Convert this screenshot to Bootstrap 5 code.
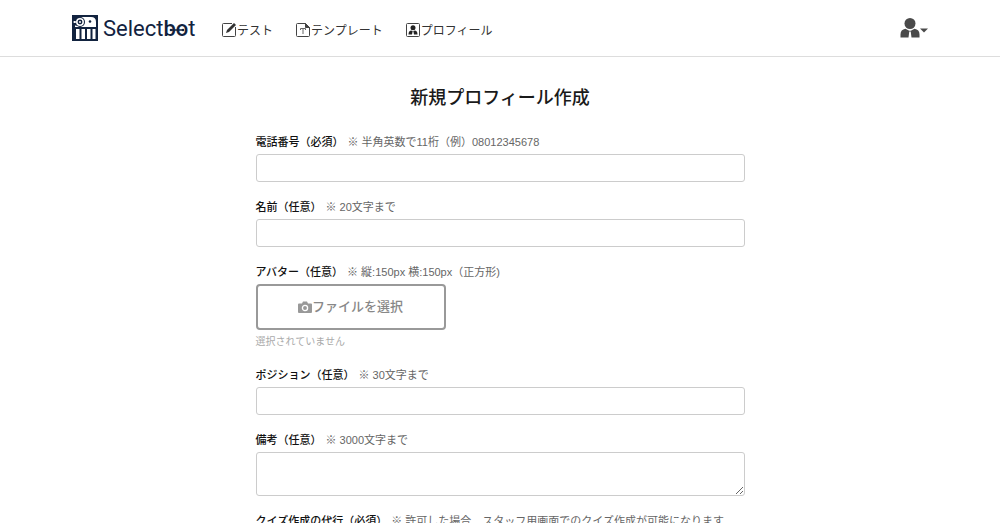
<!DOCTYPE html>
<html lang="ja">
<head>
<meta charset="utf-8">
<meta name="viewport" content="width=device-width, initial-scale=1">
<title>新規プロフィール作成 | Selectbot</title>
<link href="https://cdn.jsdelivr.net/npm/bootstrap@5.3.0/dist/css/bootstrap.min.css" rel="stylesheet">
<style>
  body { font-family: "Liberation Sans", "Noto Sans CJK JP", sans-serif; font-size: 11px; line-height: 16px; color: #222; background: #fff; }
  .site-header { border-bottom: 1px solid #ddd; min-height: 57px; padding: 0 72px; }
  .brand-mark { width: 26px; height: 26px; }
  .brand-name { width: 95px; height: 28px; }
  .main-menu { gap: 22px; font-size: 12px; padding-top: 4px; }
  .main-menu a { color: #333; }
  .main-menu svg { width: 16px; height: 16px; }
  .main-menu span { padding-top: 1px; }
  .user-toggle { color: #4a4a4a; }
  .page-title { font-size: 18px; line-height: 24px; font-weight: 500; margin: 29px 0 24px; color: #1a1a1a; }
  .profile-form { max-width: 489px; }
  .field { margin-bottom: 17px; }
  .field-label { margin-bottom: 4px; gap: 4px; }
  .field-label label { font-weight: 500; color: #111; }
  .note { color: #666; }
  .profile-form .form-control { border-color: #ccc; border-radius: 3px; min-height: 28px; padding: 4px 8px; font-size: 12px; line-height: 18px; }
  .profile-form textarea.form-control { height: 44px; }
  .file-button { width: 190px; height: 46px; border: 2px solid #999; border-radius: 4px; color: #888; font-size: 13px; font-weight: 500; background: #fff; }
  .file-state { color: #aaa; font-size: 10px; line-height: 16px; margin-top: 4px; }
</style>
</head>
<body>
<header class="site-header d-flex align-items-center">
  <a href="#" class="d-flex align-items-center text-decoration-none" aria-label="Selectbot">
    <svg class="brand-mark" viewBox="0 0 26 26">
      <rect width="26" height="26" fill="#12233f"/>
      <path d="M2 6h4v2H2zM7 2h12q5 0 5 5v5H3v-1.500h4z" fill="#fff"/>
      <circle cx="8" cy="7" r="5" fill="#12233f"/>
      <circle cx="8" cy="7" r="3.200" fill="none" stroke="#fff" stroke-width="1.500"/>
      <circle cx="8" cy="7" r="1" fill="#fff"/><circle cx="18" cy="6.500" r="1.300" fill="#12233f"/>
      <path d="M1.500 6.200h3v1.600h-3zM4 14h3.500v10H4zM9.500 14H13v10H9.500zM15 14h3.500v10H15zM20.500 14h3v10h-3z" fill="#fff"/>
    </svg>
    <svg class="brand-name ms-1" viewBox="0 0 95 28" fill="#12233f">
      <text x="1" y="22" font-family="Roboto, sans-serif" font-size="22">Selec<tspan>t</tspan><tspan font-weight="500">bo</tspan>t</text>
      <path d="M69 16h11" stroke="#12233f" stroke-width="1.500"/>
      <circle cx="69" cy="16" r="1.300"/><circle cx="81" cy="16" r="1.300"/>
    </svg>
  </a>
  <nav class="main-menu d-flex ms-4 me-auto">
    <a href="#" class="d-flex align-items-center text-decoration-none">
      <svg viewBox="0 0 16 16" fill="none" stroke="#444"><path d="M11 1.500H2.500a1 1 0 0 0-1 1v11a1 1 0 0 0 1 1h11a1 1 0 0 0 1-1V5"/><path d="M5 11l1-3 7-7 2 2-7 7z" fill="#333" stroke="none"/></svg><span>テスト</span></a>
    <a href="#" class="d-flex align-items-center text-decoration-none">
      <svg viewBox="0 0 16 16" fill="none" stroke="#444"><path d="M10.500 1.500h-8a1 1 0 0 0-1 1v11a1 1 0 0 0 1 1h11a1 1 0 0 0 1-1v-8z"/><path d="M10.500 1.500v4h4z" fill="#444"/><path d="M5.500 8V6.500h5V8M8 6.500V12" stroke="#666"/></svg><span>テンプレート</span></a>
    <a href="#" class="d-flex align-items-center text-decoration-none">
      <svg viewBox="0 0 16 16"><rect x="1.500" y="1.500" width="13" height="13" rx="1" fill="none" stroke="#444"/><circle cx="8" cy="5.700" r="2.500" fill="#222"/><path d="M3.500 12.500q0-4 3-4l1 1h1l1-1q3 0 3 4H9l-.5-2.500h-1L7 12.500z" fill="#222"/></svg><span>プロフィール</span></a>
  </nav>
  <button type="button" class="user-toggle btn p-0 border-0 d-flex align-items-center" aria-label="アカウント">
    <svg width="28" height="20" viewBox="0 0 28 20" fill="currentColor"><circle cx="10" cy="5.500" r="5.500"/><path d="M.5 19.500v-3q0-5 5-5.800l3.700 2h1.600l3.700-2q5 .8 5 5.800v3h-8l-.8-6h-1.400l-.8 6zM20 10.500h8l-4 4z"/></svg>
  </button>
</header>

<main class="px-3">
  <h1 class="page-title text-center">新規プロフィール作成</h1>
  <form class="profile-form mx-auto">
    <div class="field">
      <div class="field-label d-flex"><label for="tel">電話番号（必須）</label><span class="note">※ 半角英数で11桁（例）08012345678</span></div>
      <input type="tel" id="tel" class="form-control">
    </div>
    <div class="field">
      <div class="field-label d-flex"><label for="name">名前（任意）</label><span class="note">※ 20文字まで</span></div>
      <input type="text" id="name" class="form-control">
    </div>
    <div class="field">
      <div class="field-label d-flex"><label for="avatar">アバター（任意）</label><span class="note">※ 縦:150px 横:150px（正方形)</span></div>
      <button type="button" id="avatar" class="file-button d-flex align-items-center justify-content-center">
        <svg width="14" height="12" viewBox="0 0 14 12"><path d="M1 2.500h3L5 .5h4l1 2h3a1 1 0 0 1 1 1V11a1 1 0 0 1-1 1H1a1 1 0 0 1-1-1V3.500a1 1 0 0 1 1-1z" fill="#999"/><circle cx="7" cy="7" r="2.600" fill="#999" stroke="#fff" stroke-width="1.300"/></svg>ファイルを選択</button>
      <div class="file-state">選択されていません</div>
    </div>
    <div class="field">
      <div class="field-label d-flex"><label for="position">ポジション（任意）</label><span class="note">※ 30文字まで</span></div>
      <input type="text" id="position" class="form-control">
    </div>
    <div class="field">
      <div class="field-label d-flex"><label for="remarks">備考（任意）</label><span class="note">※ 3000文字まで</span></div>
      <textarea id="remarks" class="form-control"></textarea>
    </div>
    <div class="field">
      <div class="field-label d-flex"><label for="proxy">クイズ作成の代行（必須）</label><span class="note">※ 許可した場合、スタッフ用画面でのクイズ作成が可能になります</span></div>
      <select id="proxy" class="form-control"><option>許可する</option><option>許可しない</option></select>
    </div>
  </form>
</main>
<script src="https://cdn.jsdelivr.net/npm/bootstrap@5.3.0/dist/js/bootstrap.bundle.min.js"></script>
</body>
</html>
